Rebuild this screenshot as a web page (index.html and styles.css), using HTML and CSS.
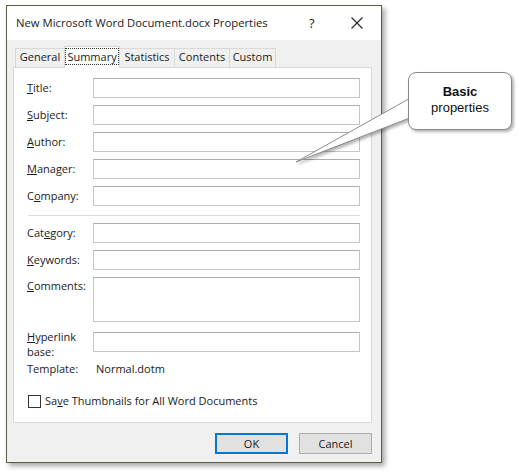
FILE: index.html
```html
<!DOCTYPE html>
<html>
<head>
<meta charset="utf-8">
<link rel="stylesheet" href="styles.css">
</head>
<body>
<div class="dialog">
  <div class="titlebar">
    <span class="title">New Microsoft Word Document.docx Properties</span>
    <span class="help">?</span>
    <svg class="close" width="12" height="12" viewBox="0 0 12 12"><path d="M0.5 0.5 L11.5 11.5 M11.5 0.5 L0.5 11.5" stroke="#222" stroke-width="1.1" fill="none"/></svg>
  </div>
  <div class="body">
    <div class="tabs">
      <div class="tab t-general">General</div>
      <div class="tab active"><span class="focus">Summary</span></div>
      <div class="tab t-stats">Statistics</div>
      <div class="tab t-contents">Contents</div>
      <div class="tab t-custom">Custom</div>
    </div>
    <div class="panel">
      <div class="row"><label><u>T</u>itle:</label><div class="input"></div></div>
      <div class="row"><label><u>S</u>ubject:</label><div class="input"></div></div>
      <div class="row"><label><u>A</u>uthor:</label><div class="input"></div></div>
      <div class="row"><label><u>M</u>anager:</label><div class="input"></div></div>
      <div class="row"><label>C<u>o</u>mpany:</label><div class="input"></div></div>
      <div class="sep"></div>
      <div class="row"><label>Cat<u>e</u>gory:</label><div class="input"></div></div>
      <div class="row"><label><u>K</u>eywords:</label><div class="input"></div></div>
      <div class="row tall"><label><u>C</u>omments:</label><div class="input area"></div></div>
      <div class="row hyper"><label><span class="ln"><u>H</u>yperlink</span><span class="ln">base:</span></label><div class="input"></div></div>
      <div class="row tmpl"><label>Template:</label><span class="value">Normal.dotm</span></div>
      <div class="check"><span class="box"></span><span class="check-text">Sa<u>v</u>e Thumbnails for All Word Documents</span></div>
    </div>
    <div class="buttons">
      <div class="btn default">OK</div>
      <div class="btn">Cancel</div>
    </div>
  </div>
</div>
<div class="callout">
  <svg class="pointer" width="140" height="110" viewBox="0 0 140 110">
    <path d="M124 36 L6 102 L130 54" fill="#ffffff" stroke="#8a8a8a" stroke-width="1"/>
  </svg>
  <div class="bubble"><b>Basic</b><br>properties</div>
</div>
</body>
</html>
```
FILE: styles.css
```css
html, body {
  margin: 0;
  padding: 0;
  background: #ffffff;
}
body {
  width: 526px;
  height: 475px;
  position: relative;
  overflow: hidden;
  font-family: "Open Sans", "Noto Sans", sans-serif;
  font-size: 11px;
  color: #1a1a1a;
}
.dialog {
  margin: 5px 0 0 6px;
  width: 376px;
  height: 458px;
  box-sizing: border-box;
  border: 1px solid #526043;
  box-shadow: 3px 3px 5px rgba(0,0,0,0.35);
  background: #f0f0f0;
  display: flex;
  flex-direction: column;
}
.titlebar {
  height: 34px;
  background: #ffffff;
  display: flex;
  align-items: center;
  padding: 0 0 0 9px;
}
.title {
  font-size: 11.3px;
  color: #1a1a1a;
  flex: 1;
  padding-bottom: 1px;
}
.help {
  font-size: 13px;
  width: 12px;
  margin-right: 30px;
}
.close {
  margin-right: 18px;
}
.body {
  flex: 1;
  padding: 5px 9px 0 6px;
  display: flex;
  flex-direction: column;
}
.tabs {
  display: flex;
  align-items: flex-end;
  height: 22px;
  padding-left: 2px;
  position: relative;
  z-index: 1;
}
.tab {
  box-sizing: border-box;
  height: 19px;
  border: 1px solid #d9d9d9;
  border-bottom: none;
  background: #f0f0f0;
  display: flex;
  align-items: center;
  justify-content: center;
  font-size: 11px;
  color: #1a1a1a;
  padding-bottom: 3px;
}
.t-general { width: 49px; border-right: none; }
.t-stats { width: 55px; border-left: none; }
.t-contents { width: 55px; border-left: none; }
.t-custom { width: 46px; border-left: none; }
.tab.active {
  height: 22px;
  width: 56px;
  margin-bottom: -1px;
  background: #ffffff;
  padding: 0 2px 3px;
}
.focus {
  border: 1px dotted #333;
  padding: 0 1px;
  line-height: 15px;
}
.panel {
  flex: 0 0 auto;
  height: 356px;
  box-sizing: border-box;
  background: #ffffff;
  border: 1px solid #d9d9d9;
  padding: 10px 11px 0 13px;
  display: flex;
  flex-direction: column;
  gap: 7px;
}
.row {
  display: flex;
  align-items: center;
  height: 20px;
}
.row label {
  width: 66px;
  font-size: 11px;
  padding-bottom: 2px;
}
.input {
  width: 267px;
  height: 20px;
  box-sizing: border-box;
  border: 1px solid #c5c5c5;
  border-top-color: #abadb3;
  background: #ffffff;
}
.row.tall { height: 45px; align-items: flex-start; }
.input.area { height: 45px; }
.row.tall label { padding-top: 1px; }
.row.hyper { margin-top: 3px; align-items: flex-start; }
.row.hyper label { padding-top: 0; line-height: 15px; margin-top: -3px; }
.ln { display: block; }
.row.tmpl { margin-top: 0; }
.value { padding-left: 3px; padding-bottom: 2px; }
.sep {
  height: 0;
  border-top: 1px solid #dcdcdc;
  border-bottom: 1px solid #ffffff;
  margin: 2px 0 -1px 1px;
  width: 332px;
}
.check {
  display: flex;
  align-items: center;
  height: 15px;
  margin-top: 8px;
  margin-left: 1px;
}
.check-text { padding-bottom: 2px; }
.box {
  width: 13px;
  height: 13px;
  box-sizing: border-box;
  border: 1px solid #333;
  background: #fff;
  margin-right: 4px;
}
.buttons {
  display: flex;
  justify-content: flex-end;
  gap: 11px;
  padding-top: 10px;
}
.btn {
  width: 73px;
  height: 21px;
  box-sizing: border-box;
  background: #e1e1e1;
  border: 1px solid #adadad;
  display: flex;
  align-items: center;
  justify-content: center;
  font-size: 11px;
  padding-bottom: 1px;
}
.btn.default {
  border: 2px solid #0078d7;
}
.callout {
  position: absolute;
  left: 280px;
  top: 60px;
  width: 246px;
  height: 120px;
}
.pointer {
  position: absolute;
  left: 10px;
  top: 0;
  filter: drop-shadow(2px 2px 1.5px rgba(0,0,0,0.3));
}
.bubble {
  position: absolute;
  left: 128px;
  top: 12px;
  width: 104px;
  height: 58px;
  box-sizing: border-box;
  border: 1px solid #8a8a8a;
  border-radius: 8px;
  background: #ffffff;
  box-shadow: 2px 2px 3px rgba(0,0,0,0.3);
  font-family: "Liberation Sans", Arial, sans-serif;
  font-size: 13px;
  line-height: 16px;
  text-align: center;
  padding-top: 11px;
  color: #111;
}
```
